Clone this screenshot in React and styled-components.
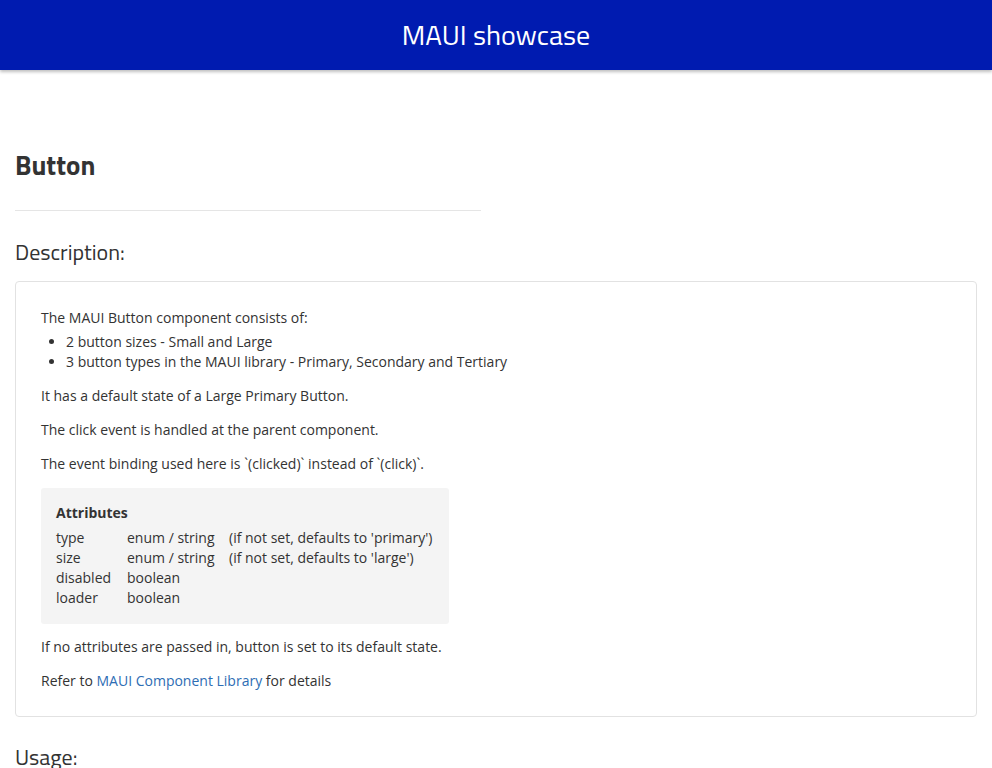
import React from "react"
import styled, { createGlobalStyle } from "styled-components"

const GlobalStyle = createGlobalStyle`
  body {
    margin: 0;
    font-family: "Open Sans", "Liberation Sans", sans-serif;
    font-size: 14px;
    line-height: 20px;
    color: #333;
    background: #fff;
  }
`

const headingFont = `"Titillium Web", "Liberation Sans Narrow", "DejaVu Sans Condensed", "Open Sans", sans-serif`

const Header = styled.header`
  height: 70px;
  background: #001bb0;
  box-shadow: 0 2px 3px rgba(0, 0, 0, 0.25);
  display: flex;
  align-items: center;
  justify-content: center;
`

const Title = styled.h1`
  margin: 0;
  font-family: ${headingFont};
  font-weight: 400;
  font-size: 28px;
  color: #fff;
`

const Main = styled.main`
  padding: 78px 15px 0;
`

const PageTitle = styled.h2`
  margin: 0;
  font-family: ${headingFont};
  font-weight: 700;
  font-size: 27px;
  line-height: 34px;
  color: #333;
`

const Rule = styled.hr`
  width: 466px;
  margin: 28px 0 0;
  border: 0;
  border-top: 1px solid #e5e5e5;
`

const SectionTitle = styled.h3`
  margin: ${p => p.$top}px 0 15px;
  font-family: ${headingFont};
  font-weight: 400;
  font-size: 22px;
  line-height: 28px;
  color: #333;
`

const Card = styled.section`
  border: 1px solid #e2e2e2;
  border-radius: 4px;
  padding: 26px 25px 11px;
`

const Para = styled.p`
  margin: 0 0 14px;
`

const List = styled.ul`
  margin: 4px 0 14px;
  padding-left: 25px;
`

const Attributes = styled.div`
  width: 378px;
  background: #f4f4f4;
  border-radius: 3px;
  padding: 15px 15px 16px;
  margin-bottom: 13px;
`

const AttrTitle = styled.div`
  font-weight: 700;
  margin-bottom: 5px;
`

const AttrRow = styled.div`
  display: grid;
  grid-template-columns: 71px 102px 1fr;
`

const Link = styled.a`
  color: #2d6db4;
  text-decoration: none;
`

const attrs = [
  ["type", "enum / string", "(if not set, defaults to 'primary')"],
  ["size", "enum / string", "(if not set, defaults to 'large')"],
  ["disabled", "boolean", ""],
  ["loader", "boolean", ""],
]

const App = () => (
  <>
    <GlobalStyle />
    <Header>
      <Title>MAUI showcase</Title>
    </Header>
    <Main>
      <PageTitle>Button</PageTitle>
      <Rule />
      <SectionTitle $top={27}>Description:</SectionTitle>
      <Card>
        <Para style={{ marginBottom: 0 }}>The MAUI Button component consists of:</Para>
        <List>
          <li>2 button sizes - Small and Large</li>
          <li>3 button types in the MAUI library - Primary, Secondary and Tertiary</li>
        </List>
        <Para>It has a default state of a Large Primary Button.</Para>
        <Para>The click event is handled at the parent component.</Para>
        <Para>The event binding used here is `(clicked)` instead of `(click)`.</Para>
        <Attributes>
          <AttrTitle>Attributes</AttrTitle>
          {attrs.map(([name, type, note]) => (
            <AttrRow key={name}>
              <span>{name}</span>
              <span>{type}</span>
              <span>{note}</span>
            </AttrRow>
          ))}
        </Attributes>
        <Para>If no attributes are passed in, button is set to its default state.</Para>
        <Para>
          Refer to <Link href="#">MAUI Component Library</Link> for details
        </Para>
      </Card>
      <SectionTitle $top={26}>Usage:</SectionTitle>
    </Main>
  </>
)

export default App
